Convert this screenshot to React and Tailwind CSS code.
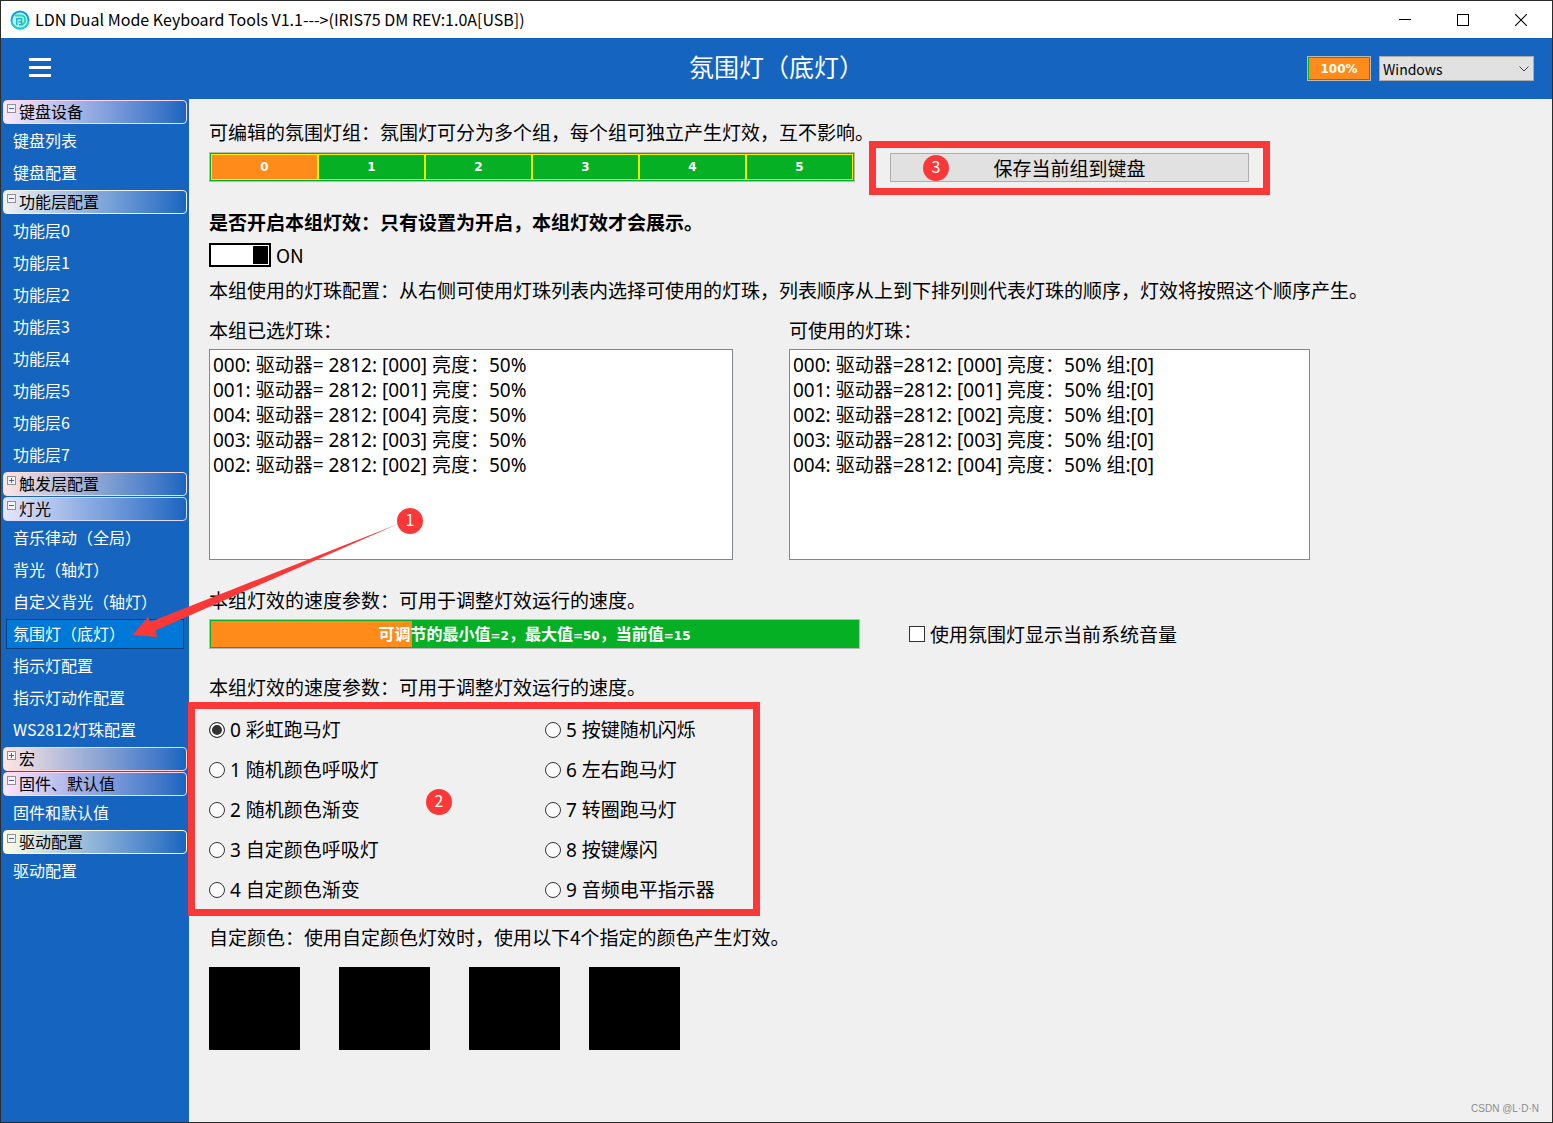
import { useState } from 'react'

const MENU = [
  {
    title: '键盘设备',
    tone: 'border-[#ffd6f5] from-[#fde8fc]',
    open: true,
    items: ['键盘列表', '键盘配置'],
  },
  {
    title: '功能层配置',
    tone: 'border-[#f2f2f2] from-[#f2f2f2]',
    open: true,
    items: ['功能层0', '功能层1', '功能层2', '功能层3', '功能层4', '功能层5', '功能层6', '功能层7'],
  },
  { title: '触发层配置', tone: 'border-[#ffdcd8] from-[#ffe6e2]', open: false, items: [] },
  {
    title: '灯光',
    tone: 'border-[#dcdcfa] from-[#e6e6fa]',
    open: true,
    items: [
      '音乐律动（全局）',
      '背光（轴灯）',
      '自定义背光（轴灯）',
      '氛围灯（底灯）',
      '指示灯配置',
      '指示灯动作配置',
      'WS2812灯珠配置',
    ],
  },
  { title: '宏', tone: 'border-[#ffd8d4] from-[#ffe6e2]', open: false, items: [] },
  { title: '固件、默认值', tone: 'border-[#ffd6f5] from-[#fde4fc]', open: true, items: ['固件和默认值'] },
  { title: '驱动配置', tone: 'border-[#ffffdc] from-[#ffffe6]', open: true, items: ['驱动配置'] },
]

const SELECTED_LEDS = ['000', '001', '004', '003', '002']
const ALL_LEDS = ['000', '001', '002', '003', '004']

const EFFECTS = [
  '彩虹跑马灯',
  '随机颜色呼吸灯',
  '随机颜色渐变',
  '自定颜色呼吸灯',
  '自定颜色渐变',
  '按键随机闪烁',
  '左右跑马灯',
  '转圈跑马灯',
  '按键爆闪',
  '音频电平指示器',
]

function AppLogo() {
  return (
    <svg viewBox="0 0 20 20" className="w-5 h-5" aria-hidden="true">
      <circle cx="10" cy="10" r="9.5" fill="#0a9df0" />
      <path d="M0.6 11.5a9.5 9.5 0 0 0 18.8 0z" fill="#19d3d0" />
      <circle cx="10" cy="10" r="7.6" fill="#b9f3f6" />
      <path d="M4.8 5.4H11a4.2 4.2 0 0 1 4.2 4.2c0 3-1.6 4.6-3.8 5.4" fill="none" stroke="#22dca0" strokeWidth="2" />
      <path d="M6.8 15V8.8H11.6v3H8.6M9 14.8h2.6V12" fill="none" stroke="#12b8dc" strokeWidth="1.5" />
    </svg>
  )
}

function TitleBar() {
  return (
    <div className="h-[37px] bg-white flex items-center pl-[9px]">
      <AppLogo />
      <span className="ml-[5px] flex-1 pb-0.5 text-base text-black">
        LDN Dual Mode Keyboard Tools V1.1---&gt;(IRIS75 DM REV:1.0A[USB])
      </span>
      <div className="flex pr-0.5">
        <button aria-label="最小化" className="w-[58px] h-9 flex items-center justify-center">
          <svg width="12" height="12" shapeRendering="crispEdges"><path d="M0 5.5h12" stroke="#000" /></svg>
        </button>
        <button aria-label="最大化" className="w-[58px] h-9 flex items-center justify-center">
          <svg width="12" height="12" shapeRendering="crispEdges"><rect x=".5" y=".5" width="11" height="11" fill="none" stroke="#000" /></svg>
        </button>
        <button aria-label="关闭" className="w-[58px] h-9 flex items-center justify-center">
          <svg width="12" height="12"><path d="M0 0l12 12M12 0L0 12" stroke="#000" strokeWidth="1.1" /></svg>
        </button>
      </div>
    </div>
  )
}

function Header() {
  return (
    <header className="h-[61px] bg-[#1565c0] grid grid-cols-[1fr_auto_1fr] items-center">
      <button aria-label="菜单" className="ml-7 mb-0.5 w-[22px] h-[19px] flex flex-col justify-between">
        <span className="h-[3px] w-full bg-white"></span>
        <span className="h-[3px] w-full bg-white"></span>
        <span className="h-[3px] w-full bg-white"></span>
      </button>
      <h1 className="text-[25px] text-white leading-8 pb-1.5">氛围灯（底灯）</h1>
      <div className="flex justify-end gap-2 pr-[18px]">
        <div className="relative w-16 h-[25px] bg-[#ff8c1a] border border-[#b9b9b9]">
          <div className="h-full border border-[#06b025] flex items-center justify-center text-white text-xs font-bold font-['DejaVu_Sans',sans-serif]">
            100%
          </div>
          <input type="range" aria-label="亮度" defaultValue="100" className="absolute inset-0 w-full h-full opacity-0" />
        </div>
        <div className="relative w-[155px] h-[25px]">
          <select aria-label="系统" className="block appearance-none w-full h-full bg-[#e1e1e1] border border-[#adadad] pl-[3px] text-sm text-black">
            <option>Windows</option>
            <option>Mac</option>
          </select>
          <svg width="10" height="6" className="absolute right-[5px] top-[10px] pointer-events-none">
            <path d="M.5.5L5 5 9.5.5" fill="none" stroke="#444" />
          </svg>
        </div>
      </div>
    </header>
  )
}

function MenuGroup({ group, active, onPick }) {
  const [open, setOpen] = useState(group.open)

  return (
    <div>
      <button
        onClick={() => setOpen(!open)}
        className={`w-full h-6 mb-px flex items-start pl-[3px] rounded border bg-gradient-to-r to-[#1565c0] ${group.tone}`}
      >
        <svg width="9" height="9" className="mt-[3px] mr-[3px]" shapeRendering="crispEdges">
          <rect x=".5" y=".5" width="8" height="8" fill="#f4f4f4" stroke="#919191" />
          <path d={open ? 'M2 4.5h5' : 'M2 4.5h5M4.5 2v5'} stroke="#4b63a7" />
        </svg>
        <span className="text-base leading-5 text-black">{group.title}</span>
      </button>
      {open && (
        <ul className="px-[3px] pb-px">
          {group.items.map((item) => (
            <li key={item} className="py-px">
              <button
                onClick={() => onPick(item)}
                className={`w-full h-[30px] pl-1.5 pb-0.5 border text-left text-base leading-[26px] text-white ${
                  active === item ? 'bg-[#0078d7] border-[#0a3f78]' : 'border-transparent'
                }`}
              >
                {item}
              </button>
            </li>
          ))}
        </ul>
      )}
    </div>
  )
}

function Badge({ children, className }) {
  return (
    <span className={`absolute w-[26px] h-[26px] rounded-full bg-[#fb3838] text-white text-base leading-[22px] text-center pointer-events-none ${className}`}>
      {children}
    </span>
  )
}

function LedList({ id, label, rows, className }) {
  return (
    <div className={className}>
      <label htmlFor={id} className="block">{label}</label>
      <select
        id={id}
        size="8"
        className="mt-1.5 block w-full h-[211px] overflow-hidden bg-white border border-[#828790] pl-[3px] font-['Noto_Sans','Noto_Sans_CJK_SC',sans-serif]"
      >
        {rows.map((row) => (
          <option key={row} className="h-[25px] p-0 leading-[25px] whitespace-pre">{row}</option>
        ))}
      </select>
    </div>
  )
}

function App() {
  const [active, setActive] = useState('氛围灯（底灯）')
  const [group, setGroup] = useState(0)
  const [on, setOn] = useState(true)
  const [effect, setEffect] = useState(0)
  const [speed, setSpeed] = useState(15)

  return (
    <div className="relative min-h-screen flex flex-col border border-[#2b2b2b] bg-[#f0f0f0] font-['Noto_Sans_CJK_SC',sans-serif]">
      <TitleBar />
      <Header />

      <div className="flex-1 flex">
        <nav className="w-[188px] shrink-0 bg-[#1565c0] px-0.5 pt-px">
          {MENU.map((g) => (
            <MenuGroup key={g.title} group={g} active={active} onPick={setActive} />
          ))}
        </nav>

        <main className="flex-1 min-w-0 px-5 pt-5 text-[19px] leading-[26px] text-black">
          <p>可编辑的氛围灯组：氛围灯可分为多个组，每个组可独立产生灯效，互不影响。</p>

          <div className="mt-[7px] flex items-end">
            <div className="w-[646px] h-[30px] flex bg-[#06b025] border border-[#b9b9b9] p-px">
              {[0, 1, 2, 3, 4, 5].map((n) => (
                <button
                  key={n}
                  onClick={() => setGroup(n)}
                  className={`flex-1 border border-[#f0f000] text-xs font-bold text-white font-['DejaVu_Sans',sans-serif] ${
                    group === n ? 'bg-[#ff8c1a]' : 'bg-[#06b025]'
                  }`}
                >
                  {n}
                </button>
              ))}
            </div>
            <div className="relative ml-[35px] w-[359px]">
              <button className="w-full h-[29px] leading-[27px] bg-[#e1e1e1] border border-[#adadad]">
                保存当前组到键盘
              </button>
              <div className="absolute -left-[21px] -right-[21px] -top-3 -bottom-[13px] border-7 border-[#fb3838] pointer-events-none"></div>
              <Badge className="left-[33px] top-0.5">3</Badge>
            </div>
          </div>

          <p className="mt-[27px] font-bold">是否开启本组灯效：只有设置为开启，本组灯效才会展示。</p>

          <button role="switch" aria-checked={on} onClick={() => setOn(!on)} className="mt-2 h-6 flex items-center gap-[5px]">
            <span className={`w-[62px] h-6 p-px bg-white border-2 border-black flex ${on ? 'justify-end' : 'justify-start'}`}>
              <span className="w-[15px] h-full bg-black"></span>
            </span>
            {on ? 'ON' : 'OFF'}
          </button>

          <p className="mt-2.5">
            本组使用的灯珠配置：从右侧可使用灯珠列表内选择可使用的灯珠，列表顺序从上到下排列则代表灯珠的顺序，灯效将按照这个顺序产生。
          </p>

          <div className="mt-3.5 flex gap-14">
            <LedList
              id="selected-leds"
              label="本组已选灯珠："
              className="w-[524px]"
              rows={SELECTED_LEDS.map((n) => `${n}: 驱动器= 2812: [${n}] 亮度：50%`)}
            />
            <LedList
              id="all-leds"
              label="可使用的灯珠："
              className="w-[521px]"
              rows={ALL_LEDS.map((n) => `${n}: 驱动器=2812: [${n}] 亮度：50% 组:[0]`)}
            />
          </div>

          <p className="mt-[27px]">本组灯效的速度参数：可用于调整灯效运行的速度。</p>

          <div className="mt-1.5 flex items-center">
            <div className="relative w-[651px] h-[30px] bg-[#06b025] border border-[#b9b9b9] p-px">
              <div className="h-full bg-[#ff8c1a]" style={{ width: `${((speed / 50) * 100 + 1).toFixed(0)}%` }}></div>
              <div className="absolute inset-0 flex items-baseline justify-center text-white text-base leading-[26px] font-bold">
                <span>可调节的最小值</span>
                <span className="text-xs font-['DejaVu_Sans',sans-serif]">=2</span>
                <span>，最大值</span>
                <span className="text-xs font-['DejaVu_Sans',sans-serif]">=50</span>
                <span>，当前值</span>
                <span className="text-xs font-['DejaVu_Sans',sans-serif]">={speed}</span>
              </div>
              <input
                type="range"
                aria-label="速度"
                min="2"
                max="50"
                value={speed}
                onChange={(e) => setSpeed(Number(e.target.value))}
                className="absolute inset-0 w-full h-full opacity-0"
              />
            </div>
            <label className="ml-[49px] flex items-center gap-[5px]">
              <input type="checkbox" className="appearance-none w-4 h-4 bg-white border border-[#333] checked:bg-[#333]" />
              使用氛围灯显示当前系统音量
            </label>
          </div>

          <p className="mt-[25px]">本组灯效的速度参数：可用于调整灯效运行的速度。</p>

          <div className="relative mt-2.5 w-[530px]">
            <div className="grid grid-flow-col grid-rows-5 grid-cols-[336px_1fr] font-['Noto_Sans','Noto_Sans_CJK_SC',sans-serif]">
              {EFFECTS.map((name, i) => (
                <label key={name} className="h-10 pb-px flex items-center gap-[5px]">
                  <input
                    type="radio"
                    name="effect"
                    checked={effect === i}
                    onChange={() => setEffect(i)}
                    className="appearance-none w-4 h-4 rounded-full bg-white border border-[#333] checked:bg-[#333] checked:shadow-[inset_0_0_0_2px_#fff]"
                  />
                  {i} {name}
                </label>
              ))}
            </div>
            <div className="absolute -left-[21px] -right-[21px] -top-2 -bottom-1.5 border-7 border-[#fb3838] pointer-events-none"></div>
            <Badge className="left-[217px] top-[79px]">2</Badge>
          </div>

          <p className="mt-3.5">自定颜色：使用自定颜色灯效时，使用以下4个指定的颜色产生灯效。</p>

          <div className="mt-[17px] flex">
            <button aria-label="颜色1" className="w-[91px] h-[83px] mr-[39px] bg-black"></button>
            <button aria-label="颜色2" className="w-[91px] h-[83px] mr-[39px] bg-black"></button>
            <button aria-label="颜色3" className="w-[91px] h-[83px] mr-[29px] bg-black"></button>
            <button aria-label="颜色4" className="w-[91px] h-[83px] bg-black"></button>
          </div>
        </main>
      </div>

      {/* 标注 1：指向左侧菜单的箭头 */}
      <svg width="270" height="120" className="absolute left-[131px] top-[519px] pointer-events-none" aria-hidden="true">
        <path d="M0.5 115L16 97L18 102L266 4L23.5 110.5L25 117Z" fill="#fb3838" />
      </svg>
      <Badge className="left-[396px] top-[507px]">1</Badge>

      <span className="absolute right-[13px] bottom-[5px] text-[10px] leading-4 text-[#8c8c8c] font-['Liberation_Sans',sans-serif]">
        CSDN @L·D·N
      </span>
    </div>
  )
}

export default App
